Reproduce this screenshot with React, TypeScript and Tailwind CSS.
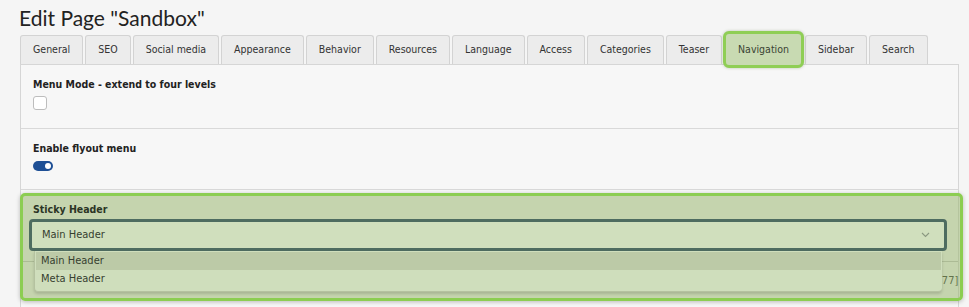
const tabs = [
  "General",
  "SEO",
  "Social media",
  "Appearance",
  "Behavior",
  "Resources",
  "Language",
  "Access",
  "Categories",
  "Teaser",
  "Navigation",
  "Sidebar",
  "Search",
];

const ui = { fontFamily: '"DejaVu Sans Condensed", "DejaVu Sans", sans-serif' };

function Tab({ label }: { label: string }) {
  if (label === "Navigation") {
    return (
      <div className="relative -my-[4px] -mx-[1px] h-[37px] whitespace-nowrap rounded-[6px] border-[3px] border-[#8fce55] bg-[#c8dab2] px-[12px] flex items-center text-[10.5px] text-[#3a4434] shadow-[0_0_3px_rgba(90,120,60,0.4)]">
        {label}
      </div>
    );
  }
  return (
    <div className="h-[29px] whitespace-nowrap rounded-t-[3px] border border-b-0 border-[#d3d3d3] bg-[#ececec] px-[12px] flex items-center text-[10.5px] text-[#333]">
      {label}
    </div>
  );
}

export default function App() {
  return (
    <div className="w-[969px] h-[307px] overflow-hidden bg-[#f5f5f5] text-[#222]" style={ui}>
      <h1
        className="pl-[19px] pt-[3px] h-[36px] text-[21px] leading-[30px] text-[#222]"
        style={{ fontFamily: "Lato, sans-serif" }}
      >
        Edit Page "Sandbox"
      </h1>

      <div className="flex items-end gap-[2px] pl-[20px] h-[28px]">
        {tabs.map((t) => (
          <Tab key={t} label={t} />
        ))}
      </div>

      <div className="ml-[20px] w-[939px] border-l border-r border-t border-[#d6d6d6] bg-[#f7f7f7]">
        <div className="h-[64px] border-b border-[#d9d9d9] pl-[12px] pt-[12px]">
          <div className="text-[10.5px] font-bold leading-[14px] text-[#222]">
            Menu Mode - extend to four levels
          </div>
          <div className="mt-[5px] w-[14px] h-[14px] rounded-[3px] border border-[#bdbdbd] bg-white" />
        </div>

        <div className="h-[61px] border-b border-[#d9d9d9] pl-[12px] pt-[12px]">
          <div className="text-[10.5px] font-bold leading-[14px] text-[#222]">Enable flyout menu</div>
          <div className="mt-[6px] w-[20px] h-[10px] rounded-full bg-[#1e4f95] flex items-center justify-end pr-[2px]">
            <div className="w-[6px] h-[6px] rounded-full bg-white" />
          </div>
        </div>

        <div className="relative h-[120px]">
          <div className="absolute left-0 right-0 top-[71px] border-b border-[#c4c4c4]" />
          <div className="absolute left-[917px] top-[83px] text-[11px] text-[#333]">[77]</div>

          <div className="absolute -left-px top-[3px] w-[943px] h-[108px] rounded-[5px] border-[3px] border-[#8ccd52] bg-[#93b165]/50 shadow-[0_1px_4px_rgba(0,0,0,0.25)] pl-[6px] pt-[6px]">
            <div className="ml-[4px] text-[10.5px] font-bold leading-[14px] text-[#2b3525]">Sticky Header</div>
            <div className="relative mt-[3px] w-[918px]">
              <div className="h-[32px] rounded-[4px] border-[3px] border-[#4e6c60] bg-[#d0dfbd] pl-[10px] pr-[14px] flex items-center justify-between text-[11px] text-[#36402f]">
                <span>Main Header</span>
                <svg width="9" height="6" viewBox="0 0 9 6" fill="none">
                  <path d="M1 1l3.5 3.5L8 1" stroke="#8a9880" strokeWidth="1.1" />
                </svg>
              </div>
              <div className="absolute left-[5px] top-[32px] w-[908px] h-[41px] rounded-b-[4px] bg-[#cfdebc] border-l border-b border-[#b5c2a0] shadow-[0_2px_3px_rgba(0,0,0,0.15)] pt-[1px] text-[11px] text-[#36402f]">
                <div className="mx-px h-[18px] bg-[#bccaa7] pl-[5px] flex items-center">Main Header</div>
                <div className="h-[19px] pl-[6px] flex items-center">Meta Header</div>
              </div>
            </div>
          </div>
        </div>
      </div>
    </div>
  );
}
